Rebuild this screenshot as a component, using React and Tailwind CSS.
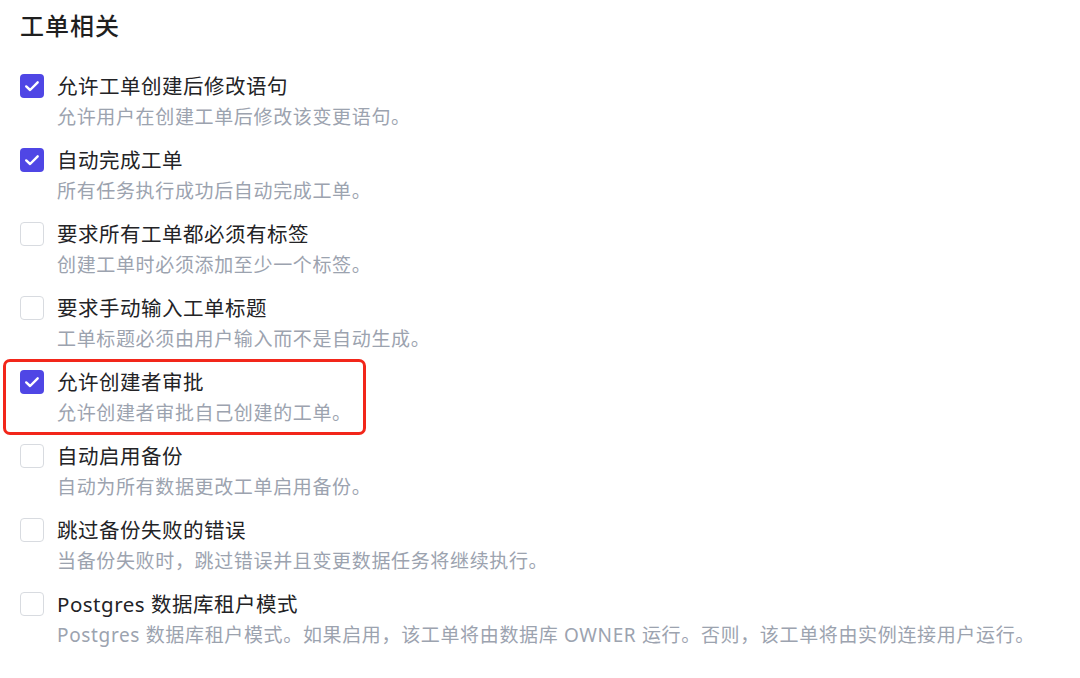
import React from 'react';

const items = [
  { title: '允许工单创建后修改语句', desc: '允许用户在创建工单后修改该变更语句。', checked: true },
  { title: '自动完成工单', desc: '所有任务执行成功后自动完成工单。', checked: true },
  { title: '要求所有工单都必须有标签', desc: '创建工单时必须添加至少一个标签。', checked: false },
  { title: '要求手动输入工单标题', desc: '工单标题必须由用户输入而不是自动生成。', checked: false },
  { title: '允许创建者审批', desc: '允许创建者审批自己创建的工单。', checked: true, marked: true },
  { title: '自动启用备份', desc: '自动为所有数据更改工单启用备份。', checked: false },
  { title: '跳过备份失败的错误', desc: '当备份失败时，跳过错误并且变更数据任务将继续执行。', checked: false },
  { title: 'Postgres 数据库租户模式', desc: 'Postgres 数据库租户模式。如果启用，该工单将由数据库 OWNER 运行。否则，该工单将由实例连接用户运行。', checked: false },
];

function Checkbox({ checked }){
  if(checked){
    return (
      <div className="w-6 h-6 shrink-0 rounded-[4px] bg-[#4f46e5]">
        <svg width="24" height="24" viewBox="0 0 24 24" fill="none">
          <path d="M6.2 12.4l3.9 3.6 7.6-7.7" stroke="#fff" strokeWidth="2.4" strokeLinecap="round" strokeLinejoin="round" />
        </svg>
      </div>
    );
  }
  return <div className="w-6 h-6 shrink-0 rounded-[4px] bg-white border border-[#d8dbe0]" />;
}

export default function App(){
  return (
    <div className="w-[1080px] h-[678px] bg-white overflow-hidden pl-5 pt-[10px]" style={{ fontFamily: '"Noto Sans", "Noto Sans CJK SC", sans-serif' }}>
      <h2 className="text-[24px] leading-[32px] font-medium text-[#1f1f1f] tracking-[1px]">工单相关</h2>
      <div className="mt-[30px] flex flex-col gap-[15px]">
        {items.map((it, i)=>(
          <div key={i} className="relative flex items-start gap-[13px]">
            {it.marked && (
              <span className="absolute -left-[17px] -top-[9px] w-[363px] h-[76px] border-[3px] border-[#f2261a] rounded-[7px] pointer-events-none" />
            )}
            <div className="pt-[2px]"><Checkbox checked={it.checked} /></div>
            <div>
              <div className="text-[20.5px] leading-[28px] text-[#232326] tracking-[0.5px]">{it.title}</div>
              <div className="mt-[3px] text-[19px] leading-[28px] text-[#9ca3af] tracking-[0.65px]">{it.desc}</div>
            </div>
          </div>
        ))}
      </div>
    </div>
  );
}
